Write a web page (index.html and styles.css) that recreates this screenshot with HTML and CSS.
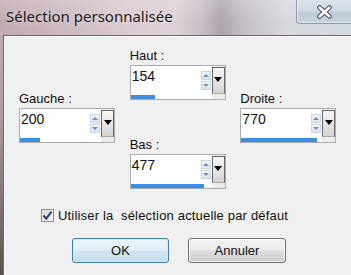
FILE: index.html
```html
<!DOCTYPE html>
<html lang="fr">
<head>
<meta charset="utf-8">
<title>Sélection personnalisée</title>
<link rel="stylesheet" href="styles.css">
</head>
<body>
<div class="window">
  <div class="titlebar">
    <span class="title">Sélection personnalisée</span>
    <div class="close">
      <svg width="17" height="14" viewBox="0 0 17 14">
        <path d="M3.5 2.5 L13.5 11.5 M13.5 2.5 L3.5 11.5" stroke="#4b525c" stroke-width="4.6" stroke-linecap="round" fill="none"/>
        <path d="M3.5 2.5 L13.5 11.5 M13.5 2.5 L3.5 11.5" stroke="#ffffff" stroke-width="2.4" stroke-linecap="round" fill="none"/>
      </svg>
    </div>
  </div>
  <div class="client">
    <div class="fields">
      <div class="col col-side">
        <div class="field">
          <div class="label">Gauche :</div>
          <div class="box">
            <div class="value">200</div>
            <div class="spin"><span class="spin-btn"><span class="arrow-up"></span></span><span class="spin-btn"><span class="arrow-down"></span></span></div>
            <div class="drop"><span class="tri"></span></div>
            <div class="bar"><div class="fill" style="width:20px"></div></div>
          </div>
        </div>
      </div>
      <div class="col col-mid">
        <div class="field">
          <div class="label">Haut :</div>
          <div class="box">
            <div class="value">154</div>
            <div class="spin"><span class="spin-btn"><span class="arrow-up"></span></span><span class="spin-btn"><span class="arrow-down"></span></span></div>
            <div class="drop"><span class="tri"></span></div>
            <div class="bar"><div class="fill" style="width:24px"></div></div>
          </div>
        </div>
        <div class="field field-bas">
          <div class="label">Bas :</div>
          <div class="box">
            <div class="value">477</div>
            <div class="spin"><span class="spin-btn"><span class="arrow-up"></span></span><span class="spin-btn"><span class="arrow-down"></span></span></div>
            <div class="drop"><span class="tri"></span></div>
            <div class="bar"><div class="fill" style="width:73px"></div></div>
          </div>
        </div>
      </div>
      <div class="col col-side">
        <div class="field">
          <div class="label">Droite :</div>
          <div class="box">
            <div class="value">770</div>
            <div class="spin"><span class="spin-btn"><span class="arrow-up"></span></span><span class="spin-btn"><span class="arrow-down"></span></span></div>
            <div class="drop"><span class="tri"></span></div>
            <div class="bar"><div class="fill" style="width:76px"></div></div>
          </div>
        </div>
      </div>
    </div>
    <div class="check-row">
      <span class="checkbox">
        <svg width="11" height="11" viewBox="0 0 11 11"><path d="M1.5 5.5 L4.2 8.6 L9.5 1.6" stroke="#2b3f7e" stroke-width="2" fill="none"/></svg>
      </span>
      <span class="check-text">Utiliser la&nbsp; sélection actuelle par défaut</span>
    </div>
    <div class="buttons">
      <button class="btn btn-default">OK</button>
      <button class="btn">Annuler</button>
    </div>
  </div>
</div>
</body>
</html>
```

FILE: styles.css
```css
html, body {
  margin: 0;
  padding: 0;
}
body {
  width: 351px;
  height: 275px;
  overflow: hidden;
  background: linear-gradient(180deg, #c7b3b8 0%, #b29ca0 40%, #85716f 75%, #5e504e 100%);
  font-family: "Liberation Sans", Arial, sans-serif;
  font-size: 13px;
  color: #000;
}
.window {
  height: 275px;
  display: flex;
  flex-direction: column;
}
.titlebar {
  height: 35px;
  flex: none;
  display: flex;
  justify-content: space-between;
  align-items: flex-start;
  background:
    linear-gradient(180deg, rgba(255,255,255,0.18) 0%, rgba(255,255,255,0) 60%),
    linear-gradient(90deg, #c2abb2 0%, #cbb7bd 15%, #d8cad0 35%, #ddd2d7 50%, #c7bcc5 58%, #aea4ae 63%, #c6c0c8 70%, #d9d9df 82%, #d3dae2 100%);
}
.title {
  font-family: "Noto Sans", "Open Sans", sans-serif;
  font-size: 15px;
  color: #1a1a1a;
  padding: 6px 0 0 6px;
  line-height: 20px;
  text-shadow: 0 0 6px rgba(255,255,255,0.7);
}
.close {
  width: 55px;
  height: 24px;
  box-sizing: border-box;
  border: 1px solid #8b98a8;
  border-top: none;
  border-right: none;
  border-bottom-left-radius: 4px;
  background: linear-gradient(180deg, #dce3ea 0%, #cdd7e1 50%, #bcc9d6 55%, #c9d4de 100%);
  box-shadow: inset 1px 0 0 rgba(255,255,255,0.6), inset 0 -1px 0 rgba(255,255,255,0.5);
  display: flex;
  align-items: center;
  justify-content: center;
}
.client {
  flex: 1;
  margin-left: 3px;
  background: #f0f0f0;
  border-top: 1px solid #6f6468;
  border-left: 1px solid #6f6468;
  box-shadow: inset 1px 1px 0 #ffffff;
  display: flex;
  flex-direction: column;
  padding-left: 15px;
}
.fields {
  display: flex;
}
.col {
  display: flex;
  flex-direction: column;
}
.col-side {
  padding-top: 55px;
  width: 112px;
}
.col-mid {
  padding-top: 12px;
  width: 112px;
}
.field-bas {
  margin-top: 37px;
}
.label {
  line-height: 15px;
  margin-bottom: 2px;
  color: #111;
}
.box {
  width: 96px;
  height: 35px;
  box-sizing: border-box;
  border: 1px solid #a9acb2;
  display: grid;
  grid-template-columns: 1fr 11px 13px;
  grid-template-rows: 29px 4px;
  background: #ececec;
}
.value {
  background: #fff;
  font-size: 14px;
  line-height: 16px;
  padding: 2px 0 0 1px;
  color: #111;
}
.spin {
  background: #fff;
  display: flex;
  flex-direction: column;
  gap: 1px;
  padding: 5px 1px 0 0;
}
.spin-btn {
  height: 9px;
  box-sizing: border-box;
  border: 1px solid #c9d5e4;
  background: linear-gradient(180deg, #f1f5fa 0%, #d9e4f0 100%);
  display: flex;
  align-items: center;
  justify-content: center;
}
.arrow-up {
  width: 0;
  height: 0;
  border-left: 3px solid transparent;
  border-right: 3px solid transparent;
  border-bottom: 3px solid #6f8fbd;
}
.arrow-down {
  width: 0;
  height: 0;
  border-left: 3px solid transparent;
  border-right: 3px solid transparent;
  border-top: 3px solid #6f8fbd;
}
.drop {
  grid-row: 1;
  grid-column: 3;
  margin-top: 1px;
  height: 27px;
  box-sizing: border-box;
  border: 1px solid #676767;
  border-bottom-color: #a8a8a8;
  background: linear-gradient(180deg, #f6f6f6 0%, #e6e6e6 45%, #d4d4d4 100%);
  display: flex;
  justify-content: center;
  padding-top: 9px;
}
.tri {
  width: 0;
  height: 0;
  border-left: 4px solid transparent;
  border-right: 4px solid transparent;
  border-top: 5px solid #000;
}
.bar {
  grid-row: 2;
  grid-column: 1 / 3;
  background: #fff;
}
.fill {
  height: 4px;
  background: #3a8ee6;
}
.check-row {
  display: flex;
  align-items: center;
  gap: 4px;
  margin-top: 19px;
  padding-left: 22px;
  line-height: 15px;
}
.checkbox {
  width: 13px;
  height: 13px;
  box-sizing: border-box;
  border: 1px solid #8e8f8f;
  background: linear-gradient(135deg, #dcdcdc 0%, #f4f4f4 100%);
  display: flex;
  align-items: center;
  justify-content: center;
}
.check-text {
  color: #111;
  letter-spacing: 0.18px;
}
.buttons {
  display: flex;
  gap: 19px;
  margin-top: 15px;
  padding-left: 53px;
}
.btn {
  width: 98px;
  height: 25px;
  box-sizing: border-box;
  border: 1px solid #707070;
  border-radius: 3px;
  background: linear-gradient(180deg, #f2f2f2 0%, #ebebeb 48%, #dddddd 52%, #cfcfcf 100%);
  box-shadow: inset 0 0 0 1px rgba(255,255,255,0.7);
  font-family: "Liberation Sans", Arial, sans-serif;
  font-size: 13px;
  color: #111;
  padding: 0;
}
.btn-default {
  width: 97px;
  border-color: #3c7fb1;
  background: linear-gradient(180deg, #eaf5fb 0%, #e0eff8 48%, #cfe6f4 52%, #c4e0f2 100%);
  box-shadow: inset 0 0 0 1px #cdeefe;
}
```
